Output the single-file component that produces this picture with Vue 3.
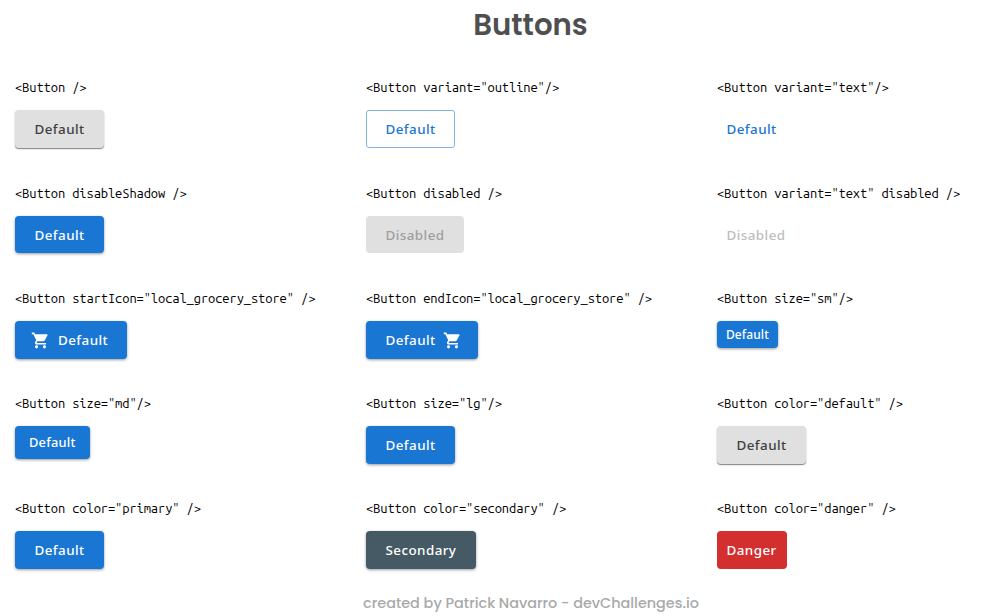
<script setup>
const items = [
  { code: '<Button />', label: 'Default', kind: 'neutral' },
  { code: '<Button variant="outline"/>', label: 'Default', kind: 'outline' },
  { code: '<Button variant="text"/>', label: 'Default', kind: 'text' },
  { code: '<Button disableShadow />', label: 'Default', kind: 'primary short' },
  { code: '<Button disabled />', label: 'Disabled', kind: 'disabled short' },
  { code: '<Button variant="text" disabled />', label: 'Disabled', kind: 'text text-disabled' },
  { code: '<Button startIcon="local_grocery_store" />', label: 'Default', kind: 'primary', icon: 'start' },
  { code: '<Button endIcon="local_grocery_store" />', label: 'Default', kind: 'primary', icon: 'end' },
  { code: '<Button size="sm"/>', label: 'Default', kind: 'primary sm' },
  { code: '<Button size="md"/>', label: 'Default', kind: 'primary md' },
  { code: '<Button size="lg"/>', label: 'Default', kind: 'primary' },
  { code: '<Button color="default" />', label: 'Default', kind: 'neutral' },
  { code: '<Button color="primary" />', label: 'Default', kind: 'primary' },
  { code: '<Button color="secondary" />', label: 'Secondary', kind: 'secondary' },
  { code: '<Button color="danger" />', label: 'Danger', kind: 'danger' },
]
</script>

<template>
  <main class="page">
    <h1 class="title">Buttons</h1>
    <section class="grid">
      <div v-for="item in items" :key="item.code" class="cell">
        <code class="code">{{ item.code }}</code>
        <button class="btn" :class="[item.kind, item.icon]" :disabled="item.label === 'Disabled'">
          <span class="label">{{ item.label }}</span>
          <svg v-if="item.icon" class="icon" viewBox="0 0 24 24" aria-hidden="true">
            <path d="M7 18c-1.1 0-1.99.9-1.99 2S5.9 22 7 22s2-.9 2-2-.9-2-2-2zM1 2v2h2l3.6 7.59-1.35 2.45c-.16.28-.25.61-.25.96 0 1.1.9 2 2 2h12v-2H7.42c-.14 0-.25-.11-.25-.25l.03-.12.9-1.63h7.45c.75 0 1.41-.41 1.75-1.03l3.58-6.49c.08-.14.12-.31.12-.48 0-.55-.45-1-1-1H5.21l-.94-2H1zm16 16c-1.1 0-1.99.9-1.99 2s.89 2 1.99 2 2-.9 2-2-.9-2-2-2z" />
          </svg>
        </button>
      </div>
    </section>
    <footer class="footer">created by Patrick Navarro - devChallenges.io</footer>
  </main>
</template>

<style>
body {
  background: #fff;
  overflow: hidden;
}
</style>

<style scoped>
.page {
  width: 987px;
  height: 616px;
  overflow: hidden;
}
.title {
  margin: 0;
  height: 79px;
  padding-left: 74px;
  line-height: 49px;
  box-sizing: border-box;
  text-align: center;
  font-family: Poppins, Inter, sans-serif;
  font-size: 29.2px;
  font-weight: 600;
  color: #4f4f4f;
}
.grid {
  display: grid;
  grid-template-columns: repeat(3, 351px);
  grid-template-rows: 106px repeat(4, 105px);
  padding-left: 15px;
  height: 512px;
}
.cell {
  display: flex;
  flex-direction: column;
  align-items: flex-start;
  gap: 13px;
}
.code {
  height: 18px;
  line-height: 17px;
  font-family: "Ubuntu Mono", "DejaVu Sans Mono", monospace;
  font-size: 13px;
  letter-spacing: -0.13px;
  color: #000;
  white-space: pre;
}
.btn {
  display: flex;
  align-items: center;
  box-sizing: border-box;
  height: 38px;
  padding: 0 19.5px;
  border: 0;
  border-radius: 4px;
  font-family: "Noto Sans", sans-serif;
  font-size: 13.4px;
  font-weight: 500;
  letter-spacing: 0.44px;
  white-space: nowrap;
  color: #fff;
}
.primary,
.secondary {
  box-shadow: 0 1px 3px rgba(0, 0, 0, 0.4);
}
.primary {
  background: #1976d2;
}
.secondary {
  background: #455a64;
}
.danger {
  background: #d32f2f;
  padding: 0 9.5px;
  width: 70px;
}
.neutral {
  background: #e0e0e0;
  color: #3f3f3f;
  box-shadow: 0 1px 1px rgba(0, 0, 0, 0.4), 0 1px 2px rgba(0, 0, 0, 0.15);
}
.outline {
  background: #fff;
  border: 1px solid #7fb2e6;
  border-radius: 3px;
  padding: 0 18.5px;
  color: #1976d2;
}
.text {
  background: transparent;
  padding: 0 9.5px;
  color: #1976d2;
}
.short {
  height: 37px;
  padding-top: 1px;
}
.disabled {
  background: #e0e0e0;
  color: #9e9e9e;
}
.text-disabled {
  color: #bdbdbd;
}
.sm {
  height: 27px;
  padding: 0 9px;
  font-size: 12px;
  letter-spacing: 0.1px;
}
.md {
  height: 33px;
  padding: 0 14px;
  font-size: 12.8px;
  letter-spacing: 0.25px;
}
.md .label {
  padding-bottom: 2px;
}
.icon {
  width: 19px;
  height: 19px;
  fill: currentColor;
}
.start {
  flex-direction: row-reverse;
  gap: 8px;
  padding-left: 16px;
  padding-right: 19px;
}
.end {
  gap: 7.5px;
  padding-right: 16px;
}
.footer {
  padding-left: 75px;
  text-align: center;
  line-height: 24px;
  font-family: Poppins, Inter, sans-serif;
  font-size: 14.4px;
  font-weight: 500;
  color: #a9a9a9;
}
</style>
